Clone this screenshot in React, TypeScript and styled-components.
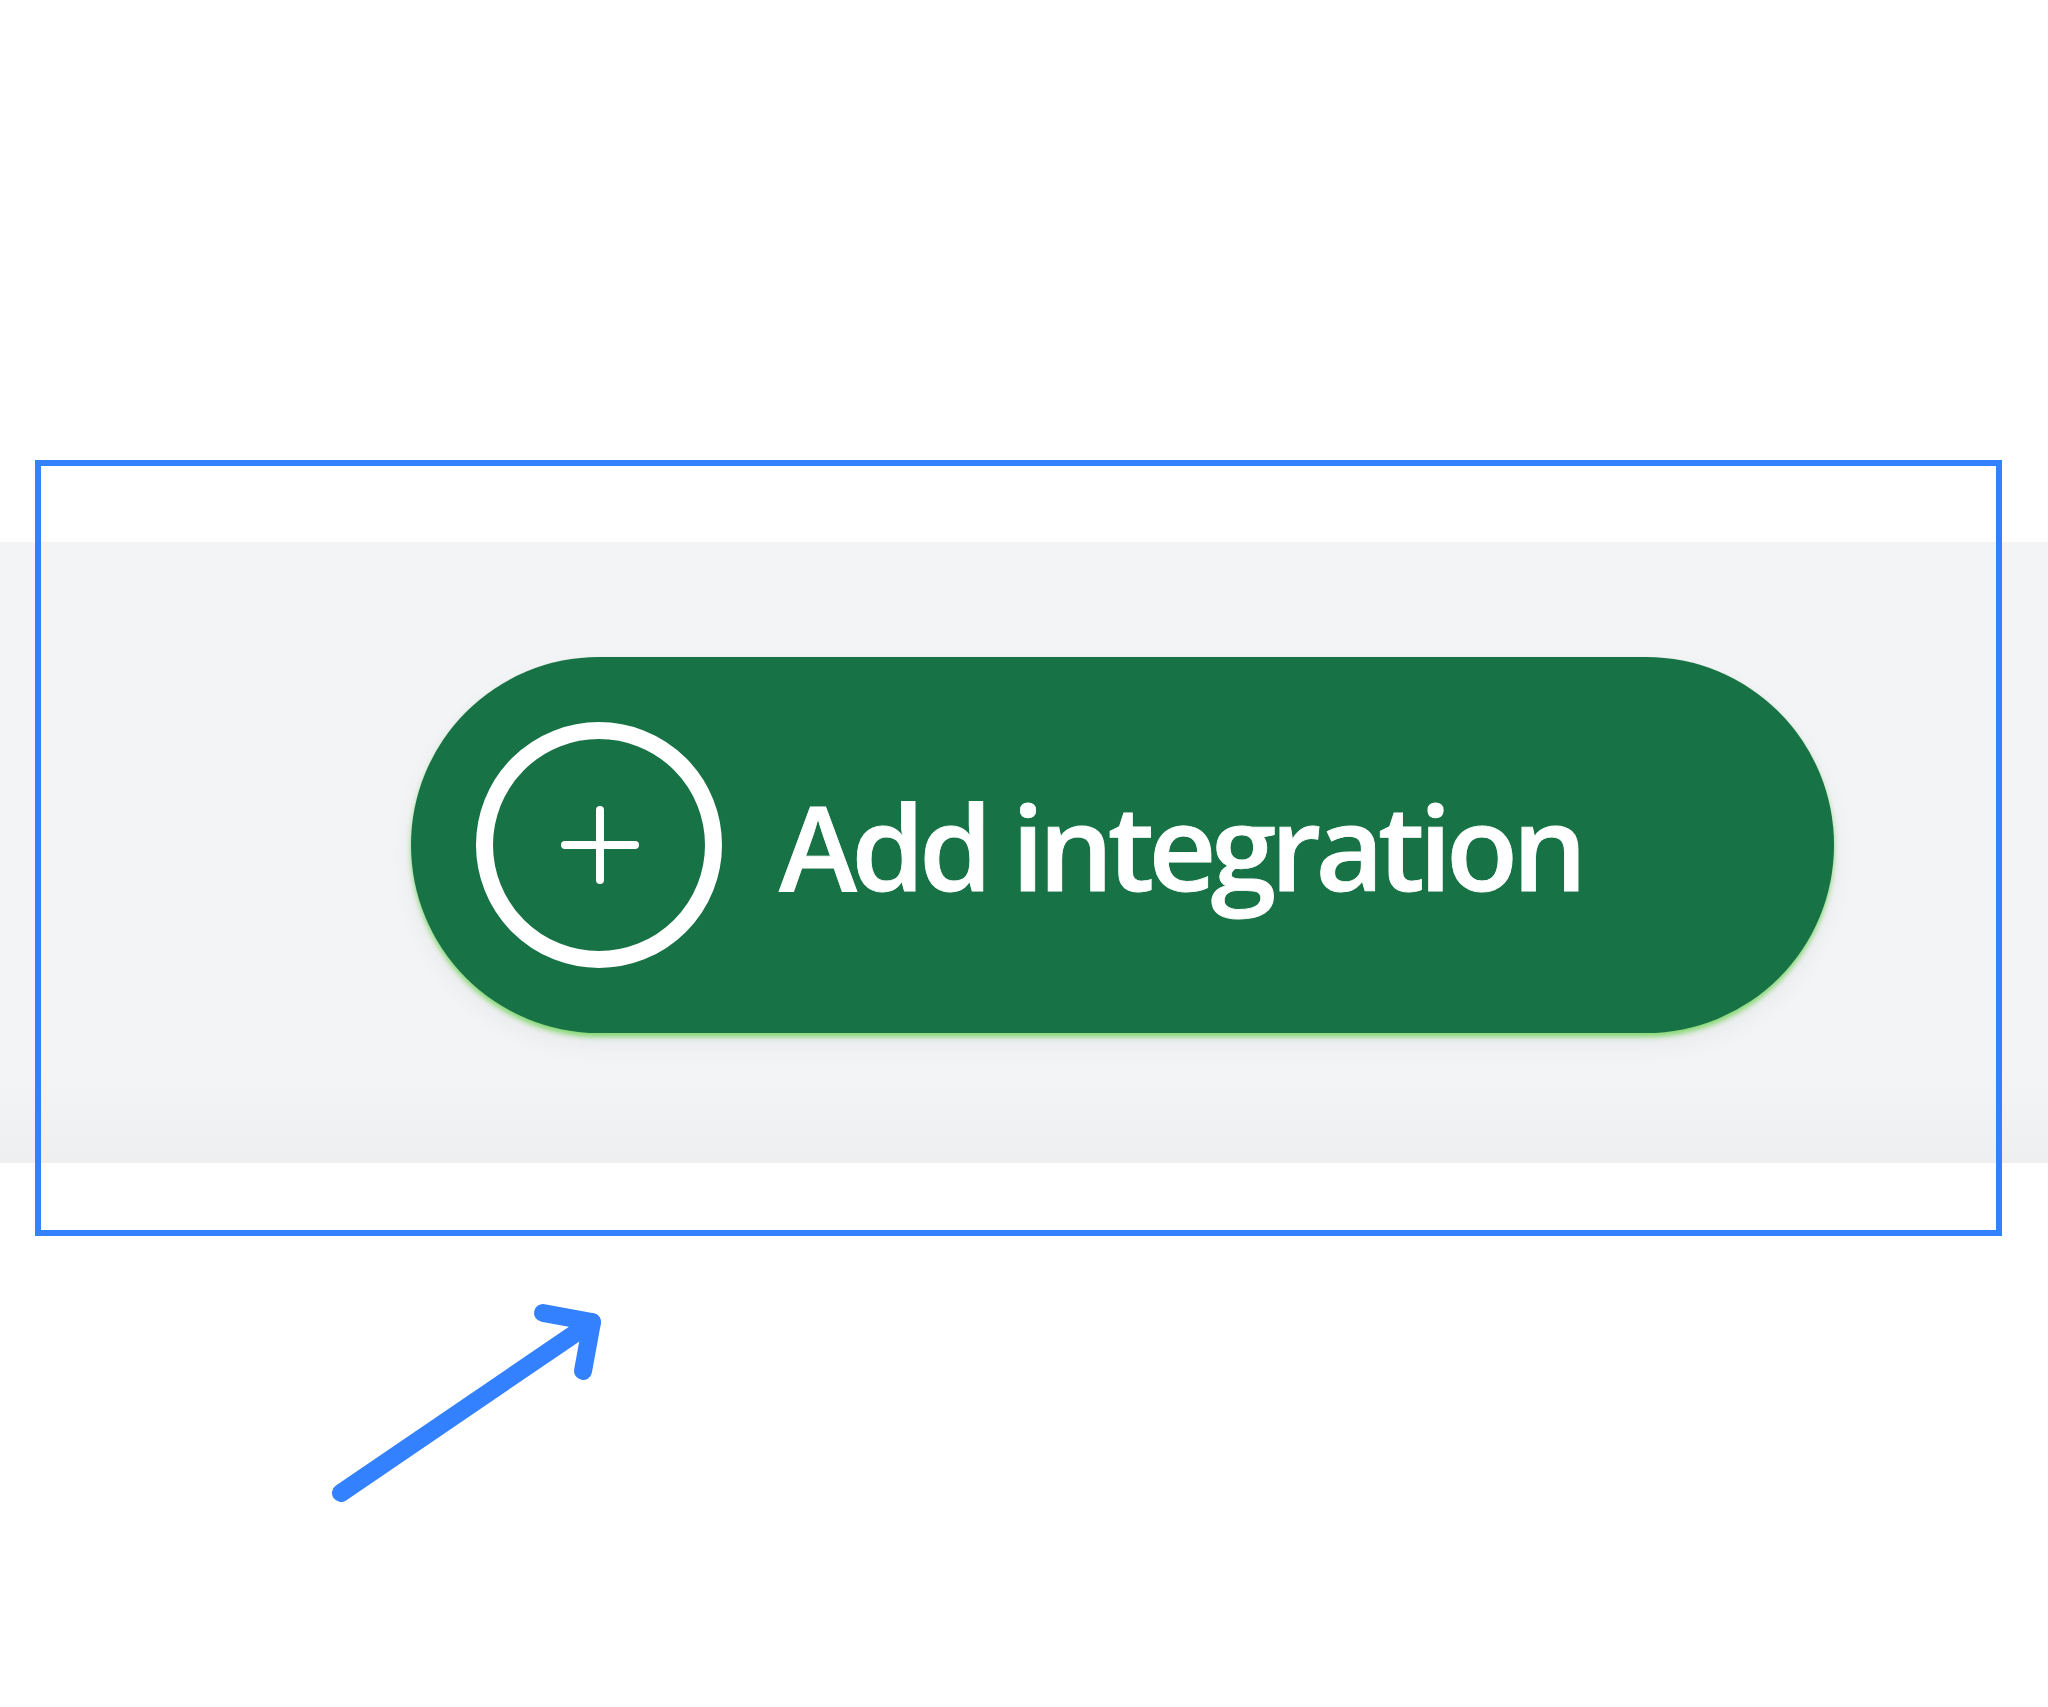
import React from "react";
import styled, { createGlobalStyle } from "styled-components";

const GlobalStyle = createGlobalStyle`
  html, body {
    margin: 0;
    padding: 0;
    background: #ffffff;
    font-family: "Open Sans", "Noto Sans", sans-serif;
  }
  * { box-sizing: border-box; }
`;

const Page = styled.div`
  position: relative;
  width: 2048px;
  height: 1707px;
  overflow: hidden;
  padding-top: 542px;
`;

const Band = styled.section`
  height: 621px;
  background: linear-gradient(180deg, #f3f4f6 0%, #f3f4f6 85%, #eeeff1 100%);
  display: flex;
  align-items: flex-start;
  padding-top: 115px;
  padding-left: 411px;
`;

const AddButton = styled.button`
  width: 1423px;
  height: 376px;
  border: none;
  border-radius: 188px;
  background: #177245;
  color: #ffffff;
  display: flex;
  align-items: center;
  gap: 57px;
  padding: 0 0 0 65px;
  cursor: pointer;
  box-shadow: 0 4px 5px rgba(125, 215, 105, 0.9), 0 12px 26px rgba(0, 0, 0, 0.05);
`;

const Label = styled.span`
  font-family: "Open Sans", "Noto Sans", sans-serif;
  font-weight: 600;
  font-size: 118px;
  line-height: 1;
  letter-spacing: -5.8px;
  white-space: nowrap;
  margin-top: 2px;
  -webkit-text-stroke: 0.8px #ffffff;
`;

const Highlight = styled.div`
  position: absolute;
  left: 35px;
  top: 460px;
  width: 1967px;
  height: 776px;
  border: 6px solid #3381ff;
  pointer-events: none;
`;

const Pointer = styled.svg`
  position: absolute;
  left: 0;
  top: 0;
  pointer-events: none;
`;

const PlusCircle = () => (
  <svg width="246" height="246" viewBox="0 0 246 246" fill="none">
    <circle cx="123" cy="123" r="114.5" stroke="#ffffff" strokeWidth="17" />
    <line x1="89" y1="123" x2="159" y2="123" stroke="#ffffff" strokeWidth="8" strokeLinecap="round" />
    <line x1="124" y1="88" x2="124" y2="158" stroke="#ffffff" strokeWidth="8" strokeLinecap="round" />
  </svg>
);

export default function App() {
  return (
    <>
      <GlobalStyle />
      <Page>
        <Band>
          <AddButton>
            <PlusCircle />
            <Label>Add integration</Label>
          </AddButton>
        </Band>
        <Highlight />
        <Pointer width="2048" height="1707" viewBox="0 0 2048 1707">
          <g stroke="#3381ff" strokeWidth="18" strokeLinecap="round" strokeLinejoin="round" fill="none">
            <line x1="341" y1="1493" x2="592" y2="1322" />
            <polyline points="543,1313 592,1322 583,1371" />
          </g>
        </Pointer>
      </Page>
    </>
  );
}
